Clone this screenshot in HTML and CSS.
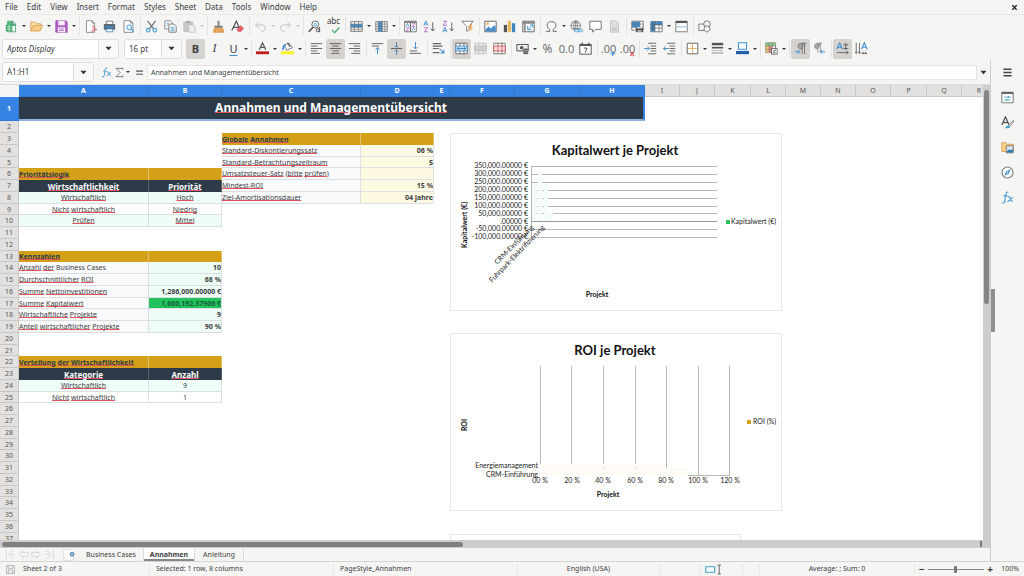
FILE: index.html
```html
<!DOCTYPE html>
<html lang="en">
<head>
<meta charset="utf-8">
<title>Annahmen und Managementübersicht</title>
<link rel="stylesheet" href="styles.css">
</head>
<body>
<svg class="sprite" aria-hidden="true">
  <symbol id="new" viewBox="0 0 16 16"><path d="M3 1.5h7l3 3v10H3z" fill="#fff" stroke="#3c9b63"/><path d="M3 1.5h7l3 3v3H3z" fill="#54b87c"/><path d="M10 1v4h3" fill="#fff" stroke="#777" stroke-width=".8"/><path d="M1 6h8v8H1z" fill="#35a565"/><path d="M2 8.500h6M2 11.500h6M5 6v8" stroke="#d9f2e2"/></symbol>
  <symbol id="open" viewBox="0 0 16 16"><path d="M1 13.500V2.500h5l1.500 2H13v3" fill="#fbe3b5" stroke="#d99a45"/><path d="M1 13.500l3-7h11.500l-3 7z" fill="#f8cf86" stroke="#d99a45"/></symbol>
  <symbol id="save" viewBox="0 0 16 16"><path d="M1 1h12.500L15 2.500V15H1z" fill="#b260c4" stroke="#9a48ae"/><path d="M4 1h8v5.500H4zM3.500 9h9v6h-9z" fill="#f7eefa"/><path d="M5 11h6M5 13h6" stroke="#b260c4"/></symbol>
  <symbol id="pdf" viewBox="0 0 16 16"><path d="M3 .8h7l3 3v11.400H3z" fill="#fff" stroke="#777"/><path d="M10 .8v3h3" fill="none" stroke="#777"/><path d="M9 15c5-5 1-6 2-8s2 5 5 5-5 0-7 3z" fill="none" stroke="#e0606a"/></symbol>
  <symbol id="print" viewBox="0 0 16 16"><path d="M4 5V1.500h8V5" fill="#fff" stroke="#666"/><rect x="1" y="5" width="14" height="7" rx="1" fill="#5d6870"/><path d="M3 8.500h10" stroke="#3f8fd0" stroke-width="2"/><path d="M4 11h8v3.500H4z" fill="#fff" stroke="#3f7fb0"/></symbol>
  <symbol id="preview" viewBox="0 0 16 16"><path d="M2.500.8h8l3 3v11.400h-11z" fill="#fff" stroke="#777"/><path d="M10.500.8v3h3" fill="none" stroke="#777"/><circle cx="9" cy="9" r="3" fill="#e2f2fb" stroke="#3f9bd0" stroke-width="1.200"/><path d="M11 11l3.500 3.500" stroke="#3f9bd0" stroke-width="1.400"/></symbol>
  <symbol id="cut" viewBox="0 0 16 16"><path d="M3 1l7.500 10M13 1L5.500 11" stroke="#666" stroke-width="1.300"/><circle cx="4" cy="12.500" r="2.200" fill="none" stroke="#3f9bd0" stroke-width="1.300"/><circle cx="12" cy="12.500" r="2.200" fill="none" stroke="#3f9bd0" stroke-width="1.300"/></symbol>
  <symbol id="copy" viewBox="0 0 16 16"><path d="M1 1h7l2 2v8H1z" fill="#fff" stroke="#777"/><path d="M6 5h6.500L15 7.500V15H6z" fill="#fff" stroke="#666"/><path d="M3 4h3M3 6.500h2M8 9h5M8 11h5M8 13h5" stroke="#3f9bd0"/></symbol>
  <symbol id="paste" viewBox="0 0 16 16"><path d="M1 2.500h11V14H1z" fill="#c9c8c6" stroke="#bbb"/><path d="M4 1h5v3H4z" fill="#aaa"/><path d="M7 6h5l3 2.500V15H7z" fill="#eee" stroke="#bbb"/></symbol>
  <symbol id="brush" viewBox="0 0 16 16"><path d="M8 1v6" stroke="#888" stroke-width="2.500"/><path d="M3 7h10v2.500H3z" fill="#777"/><path d="M3 10h10l1.500 5h-13z" fill="#f1b06b" stroke="#dd8d3c"/><path d="M5 11l-1 4M8 11v4M11 11l1 4" stroke="#c9762b" stroke-width=".7"/></symbol>
  <symbol id="clear" viewBox="0 0 16 16"><path d="M1 13L6.500 1.500 12 13M3 9h7" fill="none" stroke="#555" stroke-width="1.500"/><path d="M7 12l5-5 3.500 3.500L12 14H9z" fill="#e8616b" stroke="#c63b48" stroke-width=".7"/></symbol>
  <symbol id="undo" viewBox="0 0 16 16"><path d="M6 2L2 6l4 4M2 6h8q4 0 4 4t-5 4" fill="none" stroke="#c4c2c0" stroke-width="1.200"/></symbol>
  <symbol id="redo" viewBox="0 0 16 16"><path d="M10 2l4 4-4 4M14 6H6q-4 0-4 4t5 4" fill="none" stroke="#c4c2c0" stroke-width="1.200"/></symbol>
  <symbol id="find" viewBox="0 0 16 16"><circle cx="9" cy="5.500" r="4.300" fill="#fff" stroke="#666" stroke-width="1.200"/><path d="M6 9L1 14.500" stroke="#555" stroke-width="2"/><circle cx="9" cy="5.800" r="1.700" fill="none" stroke="#3f9bd0" stroke-width="1.200"/><circle cx="12" cy="12.500" r="2" fill="none" stroke="#555" stroke-width="1.200"/><path d="M14.300 8.500v6.500" stroke="#555" stroke-width="1.200"/></symbol>
  <symbol id="check" viewBox="0 0 16 16"><path d="M5 11l3 3.500L14 8" fill="none" stroke="#4ab072" stroke-width="1.500"/></symbol>
  <symbol id="row" viewBox="0 0 16 16"><path d="M1 2h14v12H1z" fill="#fff" stroke="#666"/><path d="M1 5h14v4H1z" fill="#3f8fd0"/><path d="M1 5h14M1 9h14M1 11.500h14M5.500 2v12M10.500 2v12" stroke="#777" stroke-width=".9"/></symbol>
  <symbol id="col" viewBox="0 0 16 16"><path d="M1 2h14v12H1z" fill="#fff" stroke="#666"/><path d="M4 2h5v12H4z" fill="#3f8fd0"/><path d="M1 5h14M1 8h14M1 11h14M4 2v12M9 2v12M12 2v12" stroke="#777" stroke-width=".9"/></symbol>
  <symbol id="sort" viewBox="0 0 16 16"><path d="M.8 1.500h14.400v13H.8z" fill="#fff" stroke="#666"/><path d="M1 2.500h14M8 2v12" stroke="#666" stroke-width="1.500"/><path d="M2.500 8l1.700-4L6 8M10 13l1.700-4 1.800 4" fill="none" stroke="#3f8fd0"/><path d="M2.500 9.500H6l-3.500 4H6M10 4.500h3.500L10 8h3.500" fill="none" stroke="#b260c4"/></symbol>
  <symbol id="az" viewBox="0 0 16 16"><path d="M1 7l2.500-6L6 7M2 5h3" fill="none" stroke="#3f8fd0" stroke-width="1.100"/><path d="M1.500 9.500h4.300l-4.300 5h4.500" fill="none" stroke="#b260c4" stroke-width="1.100"/><path d="M12 3v10.500M9.500 10.500l2.500 3 2.500-3" fill="none" stroke="#666" stroke-width="1.200"/></symbol>
  <symbol id="za" viewBox="0 0 16 16"><path d="M1 15l2.500-6L6 15M2 13h3" fill="none" stroke="#3f8fd0" stroke-width="1.100"/><path d="M1.500 1.500h4.300l-4.300 5h4.500" fill="none" stroke="#b260c4" stroke-width="1.100"/><path d="M12 3v10.500M9.500 10.500l2.500 3 2.500-3" fill="none" stroke="#666" stroke-width="1.200"/></symbol>
  <symbol id="filter" viewBox="0 0 16 16"><path d="M1 1.500h14L10 8v4l-3 2V8z" fill="#fff" stroke="#777" stroke-width="1.100"/><path d="M12 5l-3 5h3l-2 5 5-6h-3l2-4z" fill="#f3a04a"/></symbol>
  <symbol id="image" viewBox="0 0 16 16"><path d="M1 1.500h14v13H1z" fill="#fff" stroke="#666" stroke-width="1.200"/><path d="M1.500 12l4-4 3 2.500 4-4 2 2V14h-13z" fill="#4a90cf"/><circle cx="4.500" cy="4.500" r="1.500" fill="#f0a850"/></symbol>
  <symbol id="chart" viewBox="0 0 16 16"><path d="M1 6h4v9H1z" fill="#555"/><path d="M6 1h4v14H6z" fill="#e8b95d"/><path d="M11 4h4v11h-4z" fill="#3f85c0"/></symbol>
  <symbol id="pivot" viewBox="0 0 16 16"><path d="M1 1.500h14v13H1z" fill="#fff" stroke="#666" stroke-width="1.200"/><path d="M1 3.500h14M3.500 2v12" stroke="#888" stroke-width="2"/><path d="M7 7v5h5M7 12l6-6M10 6h3v3" fill="none" stroke="#3f9bd0" stroke-width="1.200"/></symbol>
  <symbol id="omega" viewBox="0 0 16 16"><path d="M1.500 14H6v-2Q2.500 9.500 2.500 6.500 2.500 2 8 2t5.500 4.500Q13.500 9.500 10 12v2h4.500" fill="none" stroke="#666" stroke-width="1.200"/></symbol>
  <symbol id="link" viewBox="0 0 16 16"><circle cx="7" cy="7" r="5.800" fill="#fff" stroke="#666"/><path d="M1 7h12M7 1v12M3 3.500h8M3 10.500h8M7 1q-5 6 0 12M7 1q5 6 0 12" fill="none" stroke="#666" stroke-width=".8"/><path d="M6 11.500h4v3H6zM11 11.500h4v3h-4z" fill="#fff" stroke="#3f9bd0"/></symbol>
  <symbol id="note" viewBox="0 0 16 16"><path d="M1 1.500h14v10H8L4.500 15v-3.500H1z" fill="#fff" stroke="#666" stroke-width="1.100"/></symbol>
  <symbol id="head" viewBox="0 0 16 16"><path d="M3 1h7l3 3v11H3z" fill="#e0dfdd" stroke="#c4c2c0"/><path d="M5 9h6v4H5z" fill="#cbc9c7"/></symbol>
  <symbol id="area" viewBox="0 0 16 16"><path d="M1 1.500h14v11H1z" fill="#fff" stroke="#666"/><path d="M1 2h10v7H1z" fill="#3f8fd0"/><path d="M1 5h14M1 9h14M6 2v10M11 2v10" stroke="#666" stroke-width=".7"/><path d="M6 10h9v5H6z" fill="#555"/><path d="M8 9h5v1H8zM8 13h5v1H8z" fill="#fff"/></symbol>
  <symbol id="freeze" viewBox="0 0 16 16"><path d="M1 2h14v12.500H1z" fill="#fff" stroke="#666"/><path d="M1 2h5v12H1zM1 2h14v4H1z" fill="#3f8fd0"/><path d="M1 6h14M1 10h14M6 2v12M11 2v12M3.500 1v13" stroke="#555" stroke-width=".8"/></symbol>
  <symbol id="split" viewBox="0 0 16 16"><path d="M1 1.500h14v13H1z" fill="#fff" stroke="#666"/><path d="M1 2.500h14" stroke="#555" stroke-width="2.500"/><path d="M2.500 8.500h11" stroke="#3f9bd0" stroke-dasharray="3 1"/></symbol>
  <symbol id="draw" viewBox="0 0 16 16"><path d="M1 5h8v8H1z" fill="none" stroke="#666"/><circle cx="11" cy="5" r="4" fill="#f5f5f4" stroke="#666"/><path d="M9 7l5 1 1 4-4 3-4-3z" fill="#f5f5f4" stroke="#666"/></symbol>

  <symbol id="left" viewBox="0 0 16 16"><path d="M1 2h14M1 5h8M1 8h14M1 11h8M1 14h11" stroke="#666" stroke-width="1.200"/></symbol>
  <symbol id="center" viewBox="0 0 16 16"><path d="M1 2h14M4 5h8M1 8h14M4 11h8M3 14h10" stroke="#666" stroke-width="1.200"/></symbol>
  <symbol id="right" viewBox="0 0 16 16"><path d="M1 2h14M7 5h8M1 8h14M7 11h8M4 14h11" stroke="#666" stroke-width="1.200"/></symbol>
  <symbol id="top" viewBox="0 0 16 16"><path d="M1 2h14M1 5h9" stroke="#666" stroke-width="1.200"/><path d="M8 15V7M5.500 9.500L8 7l2.500 2.500" fill="none" stroke="#3f8fd0" stroke-width="1.200"/></symbol>
  <symbol id="middle" viewBox="0 0 16 16"><path d="M1 8h14" stroke="#666" stroke-width="1.400"/><path d="M8 0v6M6 4.500l2 2 2-2M8 16v-6M6 11.500l2-2 2 2" fill="none" stroke="#4a87b8" stroke-width="1.200"/></symbol>
  <symbol id="bottom" viewBox="0 0 16 16"><path d="M1 11h9M1 14h14" stroke="#666" stroke-width="1.200"/><path d="M8 0v8M5.500 6L8 8.500 10.500 6" fill="none" stroke="#3f8fd0" stroke-width="1.200"/></symbol>
  <symbol id="wrap" viewBox="0 0 16 16"><path d="M1 2h10M1 5h12M1 8h7M1 13h8" stroke="#666" stroke-width="1.400"/><path d="M9 8l5 5M14.500 9.500v4h-4" fill="none" stroke="#3f8fd0" stroke-width="1.300"/></symbol>
  <symbol id="merge" viewBox="0 0 16 16"><path d="M1 1.500h14v13H1z" fill="#fff" stroke="#555"/><path d="M1 5h14v6H1z" fill="#bfe0f5" stroke="#3f8fd0"/><path d="M6 1.500V5M11 1.500V5M6 11v3.500M11 11v3.500" stroke="#555"/><path d="M3 8h10M5 6.500L3 8l2 1.500M11 6.500L13 8l-2 1.500" fill="none" stroke="#3178b5"/></symbol>
  <symbol id="merge2" viewBox="0 0 16 16"><path d="M1 1.500h14v13H1z" fill="#eee" stroke="#bbb"/><path d="M1 5h14v6H1z" fill="#d0cfcd" stroke="#bbb"/><path d="M6 1.500V5M11 1.500V5M6 11v3.500M11 11v3.500" stroke="#bbb"/></symbol>
  <symbol id="unmerge" viewBox="0 0 16 16"><path d="M1 1.500h14v13H1z" fill="#fff" stroke="#666"/><path d="M6 1.500V5M11 1.500V5M6 11v3.500M11 11v3.500" stroke="#666"/><path d="M1 5h14v6H1zM6 5v6M11 5v6" fill="#fbe3e3" stroke="#d9484e"/></symbol>
  <symbol id="money" viewBox="0 0 16 16"><path d="M1 3h14v8H1z" fill="#eee" stroke="#555" stroke-width="1.200"/><circle cx="7" cy="7" r="2.200" fill="#555"/><path d="M9 9q0-1 3-1t3 1v5q0 1-3 1t-3-1z" fill="#555"/><path d="M9.500 10.500h5M9.500 12.500h5" stroke="#ddd" stroke-width=".7"/></symbol>
  <symbol id="date" viewBox="0 0 16 16"><path d="M1 3h14v12H1z" fill="#fff" stroke="#555" stroke-width="1.200"/><path d="M1 4h14M4 1v3M12 1v3" stroke="#555" stroke-width="1.800"/><path d="M6 7.500h4L7.500 13" fill="none" stroke="#555" stroke-width="1.200"/></symbol>
  <symbol id="plus" viewBox="0 0 16 16"><path d="M12 9v6M9 12h6" stroke="#3f8fd0" stroke-width="1.300"/></symbol>
  <symbol id="cross" viewBox="0 0 16 16"><path d="M10 10l5 5M15 10l-5 5" stroke="#e0505a" stroke-width="1.300"/></symbol>
  <symbol id="indent" viewBox="0 0 16 16"><path d="M5 1.500h10M8 5h7M8 8h7M8 11h7M5 14.500h10" stroke="#666" stroke-width="1.200"/><path d="M0 8h6M4 5.500L6.500 8 4 10.500" fill="none" stroke="#3f8fd0" stroke-width="1.200"/></symbol>
  <symbol id="outdent" viewBox="0 0 16 16"><path d="M5 1.500h10M8 5h7M8 8h7M8 11h7M5 14.500h10" stroke="#666" stroke-width="1.200"/><path d="M.5 8H7M3 5.500L.5 8 3 10.500" fill="none" stroke="#3f8fd0" stroke-width="1.200"/></symbol>
  <symbol id="border" viewBox="0 0 16 16"><path d="M1.500 1.500h13v13h-13z" fill="#fff" stroke="#666" stroke-width="1.200"/><path d="M8 2v12M2 8h12" stroke="#dda04e"/></symbol>
  <symbol id="lines" viewBox="0 0 16 16"><path d="M1 2.500h14" stroke="#555" stroke-width="3"/><path d="M1 7h14" stroke="#555" stroke-width="2"/><path d="M1 10.500h14" stroke="#666" stroke-dasharray="1 1"/><path d="M1 13.500h14" stroke="#777"/></symbol>
  <symbol id="bcolor" viewBox="0 0 16 16"><path d="M3 1h10v8H3z" fill="#fff" stroke="#3f8fd0" stroke-width="1.300"/><path d="M0 11h16v4H0z" fill="#2060a8"/></symbol>
  <symbol id="cond" viewBox="0 0 16 16"><path d="M1 1h12v12H1z" fill="#fff" stroke="#666"/><path d="M1 1h4v4H1zM5 1h8v4H5z" fill="#8cc98a"/><path d="M1 5h4v4H1zM1 9h4v4H1z" fill="#efc26d"/><path d="M5 5h4v8H5z" fill="#e58080"/><path d="M1 5h12M1 9h12M5 1v12M9 1v12" stroke="#777" stroke-width=".7"/><path d="M8 8h7v7H8z" fill="#fff" stroke="#555"/><path d="M10 10.500h3M10 13h3M13 9l-3 5" stroke="#555" stroke-width=".8"/></symbol>
  <symbol id="ltr" viewBox="0 0 16 16"><path d="M10 15V1.500M13 15V1.500M15 1.500H9q-4 0-4 3.500t5 3.500" fill="#aaa" stroke="#666"/><path d="M1 12h6M4.500 9.500L7 12l-2.500 2.500" fill="none" stroke="#3f8fd0" stroke-width="1.200"/></symbol>
  <symbol id="rtl" viewBox="0 0 16 16"><path d="M6 13V1.500M9 13V1.500M11 1.500H6q-4 0-4 3.500t4 3.500" fill="#aaa" stroke="#888"/><path d="M15 12H9M11.500 9.500L9 12l2.500 2.500" fill="none" stroke="#3f8fd0" stroke-width="1.200"/></symbol>
  <symbol id="txth" viewBox="0 0 16 16"><path d="M1 9l3.500-8L8 9M2.500 6.500h4" fill="none" stroke="#3f8fd0" stroke-width="1.400"/><path d="M1 13h14M13 11l2 2-2 2M9 3.500h6M9 8h6M12 1v9" fill="none" stroke="#555"/></symbol>
  <symbol id="txtv" viewBox="0 0 16 16"><path d="M8 9l3.500-8L15 9M9.500 6.500h4" fill="none" stroke="#3f8fd0" stroke-width="1.400"/><path d="M1.500 1v13M5.500 1v13M0 12l1.500 2L3 12M4 12l1.500 2L7 12M8 14h7M10 12v3M13 12v3" fill="none" stroke="#555"/></symbol>
  <symbol id="bucket" viewBox="0 0 16 16"><path d="M4 3.500l6-2 4 5.500-7 3z" fill="#fff" stroke="#666"/><path d="M2.500 9.500q0-5 3-5.500" fill="none" stroke="#3f8fd0" stroke-width="2.200"/><path d="M8 1l3 5" stroke="#555" stroke-width="1.400"/><path d="M0 11.500h16V15H0z" fill="#fcf21e"/></symbol>
  <symbol id="fcolor" viewBox="0 0 16 16"><path d="M4 9.500L8 1l4 8.500M5.500 6.500h5" fill="none" stroke="#555" stroke-width="1.500"/><path d="M0 11.500h16V15H0z" fill="#c01c1c"/></symbol>
  <symbol id="sum" viewBox="0 0 16 16"><path d="M13 4V2H3l6 6-6 6h10v-2" fill="none" stroke="#666" stroke-width="1.200"/></symbol>
  <symbol id="equal" viewBox="0 0 16 16"><path d="M3 6h10M3 10.500h10" stroke="#555" stroke-width="1.600"/></symbol>
  <symbol id="fx" viewBox="0 0 16 16"><path d="M9 1.500Q6.500.5 6 4L4.800 12Q4 15.500 1.500 14.500M3 6h5M8.500 7q2-1 2.500 2t3.500 4M14.500 7.500L8 13.500" fill="none" stroke="#4a9bd0" stroke-width="1.400"/></symbol>
  <symbol id="menu" viewBox="0 0 16 16"><path d="M3 4h10M3 8h10M3 12h10" stroke="#444" stroke-width="1.600"/></symbol>
  <symbol id="props" viewBox="0 0 16 16"><path d="M1 1.500h14v13H1z" fill="#fff" stroke="#777" stroke-width="1.200"/><path d="M1 2.500h14" stroke="#666" stroke-width="2.500"/><path d="M4 7.500h8M4 11h8M9 6v3M7 9.500v3" stroke="#3f9bb8"/></symbol>
  <symbol id="styles" viewBox="0 0 16 16"><path d="M1 11L5.500 1 10 11M2.500 8h6" fill="none" stroke="#555" stroke-width="1.600"/><path d="M15.500 5l-6 6.500 1.500 1.500 5-7z" fill="#fff" stroke="#777"/><path d="M5 15q2-4 5-3t-1 3z" fill="#3f9bd0"/></symbol>
  <symbol id="gallery" viewBox="0 0 16 16"><path d="M1 13V2h5l1 2h8v9z" fill="#f9cf8a" stroke="#dd9b48"/><path d="M6.500 6h8.500v8.500H6.500z" fill="#dceefa" stroke="#666"/><path d="M7 13l3-3 2 1.500 2.500-2V14H7z" fill="#3178b5"/></symbol>
  <symbol id="nav" viewBox="0 0 16 16"><circle cx="8" cy="8" r="6.800" fill="#fff" stroke="#777" stroke-width="1.300"/><path d="M12 4L9.500 9.500 4 12l2.500-5.500z" fill="#3f8fd0"/><circle cx="8" cy="8" r="1" fill="#fff"/></symbol>
  <symbol id="close" viewBox="0 0 16 16"><path d="M3 3l10 10M13 3L3 13" stroke="#222" stroke-width="3"/></symbol>
  <symbol id="caret" viewBox="0 0 16 16"><path d="M1 4h14l-7 8z" fill="#2e3436"/></symbol>
  <symbol id="first" viewBox="0 0 16 16"><path d="M2 1v14M13 2L5 8l8 6M8 8h7" fill="none" stroke="#d0cecb"/></symbol>
  <symbol id="prev" viewBox="0 0 16 16"><path d="M9 2L2 8l7 6M5 5h10v6H5" fill="none" stroke="#d0cecb"/></symbol>
  <symbol id="next" viewBox="0 0 16 16"><path d="M7 2l7 6-7 6M11 5H1v6h10" fill="none" stroke="#d0cecb"/></symbol>
  <symbol id="last" viewBox="0 0 16 16"><path d="M14 1v14M3 2l8 6-8 6M1 8h7" fill="none" stroke="#d0cecb"/></symbol>
  <symbol id="addsheet" viewBox="0 0 16 16"><path d="M1 1h9l4 4v10H1z" fill="#fff" stroke="#d5d3d0"/><circle cx="12" cy="7" r="3" fill="#4f86b5"/><path d="M12 5.500v3M10.500 7h3" stroke="#fff" stroke-width=".8"/></symbol>
  <symbol id="disk" viewBox="0 0 16 16"><path d="M1 1h14v14H1zM4 1v5h8V1M4 15V9h8v6" fill="none" stroke="#8d8b89"/></symbol>
  <symbol id="selmode" viewBox="0 0 24 16"><path d="M1.500 4h13v8h-13z" fill="#fff" stroke="#3f9bc0" stroke-width="1.500"/><path d="M21 2v12M18.500 1.500h5M18.500 14.500h5" stroke="#555" stroke-width="1.300"/></symbol>
</svg>

<nav class="menubar">
  <div class="menus"><button>File</button><button>Edit</button><button>View</button><button>Insert</button><button>Format</button><button>Styles</button><button>Sheet</button><button>Data</button><button>Tools</button><button>Window</button><button>Help</button></div>
  <button class="close" aria-label="Close document"><svg><use href="#close"/></svg></button>
</nav>

<div class="toolbar" role="toolbar" aria-label="Standard">
  <button class="tb" aria-label="New"><svg><use href="#new"/></svg></button><button class="dd" aria-label="New options"></button>
  <button class="tb" aria-label="Open"><svg><use href="#open"/></svg></button><button class="dd" aria-label="Open options"></button>
  <button class="tb" aria-label="Save"><svg><use href="#save"/></svg></button><button class="dd" aria-label="Save options"></button>
  <i class="sep"></i>
  <button class="tb" aria-label="Export as PDF"><svg><use href="#pdf"/></svg></button>
  <button class="tb" aria-label="Print"><svg><use href="#print"/></svg></button>
  <button class="tb" aria-label="Print preview"><svg><use href="#preview"/></svg></button>
  <i class="sep"></i>
  <button class="tb" aria-label="Cut"><svg><use href="#cut"/></svg></button>
  <button class="tb" aria-label="Copy"><svg><use href="#copy"/></svg></button>
  <button class="tb" aria-label="Paste"><svg><use href="#paste"/></svg></button><button class="dd off" aria-label="Paste options"></button>
  <i class="sep"></i>
  <button class="tb" aria-label="Clone formatting"><svg><use href="#brush"/></svg></button>
  <button class="tb" aria-label="Clear formatting"><svg><use href="#clear"/></svg></button>
  <i class="sep"></i>
  <button class="tb" aria-label="Undo"><svg><use href="#undo"/></svg></button><button class="dd off" aria-label="Undo options"></button>
  <button class="tb" aria-label="Redo"><svg><use href="#redo"/></svg></button><button class="dd off" aria-label="Redo options"></button>
  <i class="sep"></i>
  <button class="tb" aria-label="Find and replace"><svg><use href="#find"/></svg></button>
  <button class="tb spell" aria-label="Spelling"><span>abc</span><svg><use href="#check"/></svg></button>
  <i class="sep"></i>
  <button class="tb" aria-label="Row"><svg><use href="#row"/></svg></button><button class="dd" aria-label="Row options"></button>
  <button class="tb" aria-label="Column"><svg><use href="#col"/></svg></button><button class="dd" aria-label="Column options"></button>
  <i class="sep"></i>
  <button class="tb" aria-label="Sort"><svg><use href="#sort"/></svg></button>
  <button class="tb" aria-label="Sort ascending"><svg><use href="#az"/></svg></button>
  <button class="tb" aria-label="Sort descending"><svg><use href="#za"/></svg></button>
  <button class="tb" aria-label="AutoFilter"><svg><use href="#filter"/></svg></button>
  <i class="sep"></i>
  <button class="tb" aria-label="Insert image"><svg><use href="#image"/></svg></button>
  <button class="tb" aria-label="Insert chart"><svg><use href="#chart"/></svg></button>
  <button class="tb" aria-label="Pivot table"><svg><use href="#pivot"/></svg></button>
  <i class="sep"></i>
  <button class="tb" aria-label="Special character"><svg><use href="#omega"/></svg></button><button class="dd" aria-label="Character options"></button>
  <button class="tb" aria-label="Hyperlink"><svg><use href="#link"/></svg></button>
  <button class="tb" aria-label="Comment"><svg><use href="#note"/></svg></button>
  <button class="tb" aria-label="Headers and footers"><svg><use href="#head"/></svg></button>
  <i class="sep"></i>
  <button class="tb" aria-label="Print area"><svg><use href="#area"/></svg></button>
  <button class="tb" aria-label="Freeze"><svg><use href="#freeze"/></svg></button><button class="dd" aria-label="Freeze options"></button>
  <button class="tb" aria-label="Split window"><svg><use href="#split"/></svg></button>
  <i class="sep"></i>
  <button class="tb" aria-label="Draw functions"><svg><use href="#draw"/></svg></button>
</div>

<div class="toolbar format" role="toolbar" aria-label="Formatting">
  <div class="combo font"><select aria-label="Font name"><option>Aptos Display</option></select><span class="drop"><svg><use href="#caret"/></svg></span></div>
  <div class="combo size"><select aria-label="Font size"><option>16 pt</option></select><span class="drop"><svg><use href="#caret"/></svg></span></div>
  <button class="tb on bold" aria-label="Bold">B</button>
  <button class="tb italic" aria-label="Italic">I</button>
  <button class="tb under" aria-label="Underline">U</button><button class="dd" aria-label="Underline options"></button>
  <i class="sep"></i>
  <button class="tb" aria-label="Font color"><svg><use href="#fcolor"/></svg></button><button class="dd" aria-label="Font color options"></button>
  <button class="tb" aria-label="Background color"><svg><use href="#bucket"/></svg></button><button class="dd" aria-label="Background options"></button>
  <i class="sep"></i>
  <button class="tb" aria-label="Align left"><svg><use href="#left"/></svg></button>
  <button class="tb on" aria-label="Align center"><svg><use href="#center"/></svg></button>
  <button class="tb" aria-label="Align right"><svg><use href="#right"/></svg></button>
  <i class="sep"></i>
  <button class="tb" aria-label="Align top"><svg><use href="#top"/></svg></button>
  <button class="tb on" aria-label="Center vertically"><svg><use href="#middle"/></svg></button>
  <button class="tb" aria-label="Align bottom"><svg><use href="#bottom"/></svg></button>
  <i class="sep"></i>
  <button class="tb" aria-label="Wrap text"><svg><use href="#wrap"/></svg></button>
  <i class="sep"></i>
  <button class="tb on" aria-label="Merge and center"><svg><use href="#merge"/></svg></button>
  <button class="tb" aria-label="Merge cells"><svg><use href="#merge2"/></svg></button>
  <button class="tb" aria-label="Unmerge cells"><svg><use href="#unmerge"/></svg></button>
  <i class="sep"></i>
  <button class="tb" aria-label="Currency"><svg><use href="#money"/></svg></button><button class="dd" aria-label="Currency options"></button>
  <button class="tb num pct" aria-label="Percent">%</button>
  <button class="tb num" aria-label="Number">0.0</button>
  <button class="tb" aria-label="Date"><svg><use href="#date"/></svg></button>
  <i class="sep"></i>
  <button class="tb num" aria-label="Add decimal place">.00<svg><use href="#plus"/></svg></button>
  <button class="tb num" aria-label="Delete decimal place">.00<svg><use href="#cross"/></svg></button>
  <i class="sep"></i>
  <button class="tb" aria-label="Increase indent"><svg><use href="#indent"/></svg></button>
  <button class="tb" aria-label="Decrease indent"><svg><use href="#outdent"/></svg></button>
  <i class="sep"></i>
  <button class="tb" aria-label="Borders"><svg><use href="#border"/></svg></button><button class="dd" aria-label="Border options"></button>
  <button class="tb" aria-label="Border style"><svg><use href="#lines"/></svg></button><button class="dd" aria-label="Border style options"></button>
  <button class="tb" aria-label="Border color"><svg><use href="#bcolor"/></svg></button><button class="dd" aria-label="Border color options"></button>
  <i class="sep"></i>
  <button class="tb" aria-label="Conditional formatting"><svg><use href="#cond"/></svg></button><button class="dd" aria-label="Conditional options"></button>
  <i class="sep"></i>
  <button class="tb on" aria-label="Left to right"><svg><use href="#ltr"/></svg></button>
  <button class="tb" aria-label="Right to left"><svg><use href="#rtl"/></svg></button>
  <i class="sep"></i>
  <button class="tb on" aria-label="Horizontal text"><svg><use href="#txth"/></svg></button>
  <button class="tb" aria-label="Vertical text"><svg><use href="#txtv"/></svg></button>
</div>

<div class="work">
  <main class="doc">
    <div class="formula">
      <div class="combo cellname"><select aria-label="Name box"><option>A1:H1</option></select><span class="drop"><svg><use href="#caret"/></svg></span></div>
      <button class="fb" aria-label="Function wizard"><svg><use href="#fx"/></svg></button>
      <button class="fb narrow" aria-label="Select function"><svg><use href="#sum"/></svg></button><button class="dd" aria-label="Function options"></button>
      <button class="fb eq" aria-label="Formula"><svg><use href="#equal"/></svg></button>
      <input type="text" aria-label="Input line" value="Annahmen und Managementübersicht">
      <button class="expand" aria-label="Expand formula bar"><svg><use href="#caret"/></svg></button>
    </div>
    <div class="view">
      <div class="canvas">
        <table class="sheet">
          <colgroup><col class="c-row"><col class="c-a"><col class="c-b"><col class="c-c"><col class="c-d"><col class="c-e"><col class="c-f"><col class="c-f"><col class="c-f"><col class="c-n"><col class="c-n"><col class="c-w"><col class="c-n"><col class="c-n"><col class="c-n"><col class="c-n"><col class="c-w"><col class="c-n"><col class="c-n"></colgroup>
          <thead><tr><th class="corner"></th><th class="sel">A</th><th class="sel">B</th><th class="sel">C</th><th class="sel">D</th><th class="sel">E</th><th class="sel">F</th><th class="sel">G</th><th class="sel">H</th><th>I</th><th>J</th><th>K</th><th>L</th><th>M</th><th>N</th><th>O</th><th>P</th><th>Q</th><th>R</th></tr></thead>
          <tbody>
            <tr class="first"><th class="sel">1</th><td class="title" colspan="8"><u>Annahmen</u> <u>und</u> <u>Managementübersicht</u></td></tr>
            <tr><th>2</th></tr>
            <tr><th>3</th><td></td><td></td><td class="gold"><u>Globale</u> <u>Annahmen</u></td><td class="gold"></td></tr>
            <tr><th>4</th><td></td><td></td><td class="lab"><u>Standard-Diskontierungssatz</u></td><td class="in">06 %</td></tr>
            <tr><th>5</th><td></td><td></td><td class="lab"><u>Standard-Betrachtungszeitraum</u></td><td class="in">5</td></tr>
            <tr><th>6</th><td class="gold"><u>Prioritätslogik</u></td><td class="gold"></td><td class="lab"><u>Umsatzsteuer-Satz</u> (<u>bitte</u> <u>prüfen</u>)</td><td class="in"></td></tr>
            <tr><th>7</th><td class="dark"><u>Wirtschaftlichkeit</u></td><td class="dark"><u>Priorität</u></td><td class="lab"><u>Mindest-ROI</u></td><td class="in">15 %</td></tr>
            <tr><th>8</th><td class="mid mint"><u>Wirtschaftlich</u></td><td class="mid mint"><u>Hoch</u></td><td class="lab"><u>Ziel-Amortisationsdauer</u></td><td class="in">04 Jahre</td></tr>
            <tr><th>9</th><td class="mid"><u>Nicht</u> <u>wirtschaftlich</u></td><td class="mid"><u>Niedrig</u></td></tr>
            <tr><th>10</th><td class="mid mint"><u>Prüfen</u></td><td class="mid mint"><u>Mittel</u></td></tr>
            <tr><th>11</th></tr>
            <tr><th>12</th></tr>
            <tr><th>13</th><td class="gold"><u>Kennzahlen</u></td><td class="gold"></td></tr>
            <tr><th>14</th><td class="lab"><u>Anzahl</u> <u>der</u> Business Cases</td><td class="val">10</td></tr>
            <tr><th>15</th><td class="lab"><u>Durchschnittlicher</u> <u>ROI</u></td><td class="val">68 %</td></tr>
            <tr><th>16</th><td class="lab"><u>Summe</u> <u>Nettoinvestitionen</u></td><td class="val">1,286,000.00000 €</td></tr>
            <tr><th>17</th><td class="lab"><u>Summe</u> <u>Kapitalwert</u></td><td class="val good">1,660,192.37906 €</td></tr>
            <tr><th>18</th><td class="lab"><u>Wirtschaftliche</u> <u>Projekte</u></td><td class="val">9</td></tr>
            <tr><th>19</th><td class="lab"><u>Anteil</u> <u>wirtschaftlicher</u> <u>Projekte</u></td><td class="val">90 %</td></tr>
            <tr><th>20</th></tr>
            <tr><th>21</th></tr>
            <tr><th>22</th><td class="gold"><u>Verteilung</u> <u>der</u> <u>Wirtschaftlichkeit</u></td><td class="gold"></td></tr>
            <tr><th>23</th><td class="dark"><u>Kategorie</u></td><td class="dark"><u>Anzahl</u></td></tr>
            <tr><th>24</th><td class="mid mint"><u>Wirtschaftlich</u></td><td class="mid mint">9</td></tr>
            <tr><th>25</th><td class="mid"><u>Nicht</u> <u>wirtschaftlich</u></td><td class="mid">1</td></tr>
            <tr><th>26</th></tr><tr><th>27</th></tr><tr><th>28</th></tr><tr><th>29</th></tr><tr><th>30</th></tr><tr><th>31</th></tr><tr><th>32</th></tr><tr><th>33</th></tr><tr><th>34</th></tr><tr><th>35</th></tr><tr><th>36</th></tr><tr><th>37</th></tr>
          </tbody>
        </table>
        <svg class="chart one" viewBox="1 1 330 176" role="img" aria-label="Kapitalwert je Projekt">
          <text class="ct" x="165" y="22">Kapitalwert je Projekt</text>
          <g class="grid"><path d="M81 33.500h186M81 41.500h186M81 49.500h186M81 57.500h186M81 65.500h186M81 73.500h186M81 80.500h186M81 96.500h186M81 104.500h186M81.500 33v71"/><path class="axis" d="M81 88.500h186"/></g>
          <g class="bars green"><path d="M82 50h5v38h-5zM88 40h4v48h-4zM94 50h4v38h-4zM98 80h5v8h-5z"/></g>
          <g class="tick end"><text x="78" y="35">350,000.00000 €</text><text x="78" y="43">300,000.00000 €</text><text x="78" y="51">250,000.00000 €</text><text x="78" y="59">200,000.00000 €</text><text x="78" y="67">150,000.00000 €</text><text x="78" y="75">100,000.00000 €</text><text x="78" y="83">50,000.00000 €</text><text x="78" y="91">.00000 €</text><text x="78" y="98">-50,000.00000 €</text><text x="78" y="106">-100,000.00000 €</text>
          <text transform="translate(84 95) rotate(-45)">CRM-Einführung</text><text transform="translate(95 95) rotate(-46)">Fuhrpark-Elektrifizierung</text></g>
          <text class="at" transform="translate(17 92) rotate(-90)">Kapitalwert (€)</text>
          <text class="at" x="147" y="164">Projekt</text>
          <rect x="276" y="87" width="4" height="4" fill="#2dbd5f"/><text class="tick" x="281" y="91">Kapitalwert (€)</text>
        </svg>
        <svg class="chart two" viewBox="1 1 330 176" role="img" aria-label="ROI je Projekt">
          <text class="ct" x="165" y="22">ROI je Projekt</text>
          <g class="grid"><path d="M90.500 33v98M121.500 33v98M153.500 33v103M185.500 33v103M216.500 33v103M248.500 33v109M279.500 33v109M238 142.500h42"/></g>
          <g class="bars gold-bars"><path d="M91 131h125v3H91zM91 135h147v3H91zM91 139h147v3H91z"/></g>
          <g class="tick end"><text x="88" y="135">Energiemanagement</text><text x="88" y="144">CRM-Einführung</text></g>
          <g class="tick center"><text x="90" y="150">00 %</text><text x="122" y="150">20 %</text><text x="153" y="150">40 %</text><text x="185" y="150">60 %</text><text x="216" y="150">80 %</text><text x="248" y="150">100 %</text><text x="280" y="150">120 %</text></g>
          <text class="at" transform="translate(17 92) rotate(-90)">ROI</text>
          <text class="at" x="158" y="164">Projekt</text>
          <rect x="297" y="87" width="4" height="4" fill="#d4a017"/><text class="tick" x="303" y="91">ROI (%)</text>
        </svg>
        <div class="chart three"></div>
      </div>
      <div class="vbar"><i></i></div>
    </div>
    <div class="hbar"><i></i><b></b></div>
    <div class="tabs">
      <div class="tabnav"><button aria-label="First sheet"><svg><use href="#first"/></svg></button><button aria-label="Previous sheet"><svg><use href="#prev"/></svg></button><button aria-label="Next sheet"><svg><use href="#next"/></svg></button><button aria-label="Last sheet"><svg><use href="#last"/></svg></button></div>
      <button class="add" aria-label="Add sheet"><svg><use href="#addsheet"/></svg></button>
      <button class="tab">Business Cases</button><button class="tab active">Annahmen</button><button class="tab">Anleitung</button>
    </div>
  </main>
  <aside class="side">
    <button aria-label="Sidebar settings"><svg><use href="#menu"/></svg></button>
    <button aria-label="Properties"><svg><use href="#props"/></svg></button>
    <button aria-label="Styles"><svg><use href="#styles"/></svg></button>
    <button aria-label="Gallery"><svg><use href="#gallery"/></svg></button>
    <button aria-label="Navigator"><svg><use href="#nav"/></svg></button>
    <button aria-label="Functions"><svg><use href="#fx"/></svg></button>
    <span class="grip"></span>
  </aside>
</div>

<footer class="status">
  <div class="start"><svg><use href="#disk"/></svg>Sheet 2 of 3</div>
  <div>Selected: 1 row, 8 columns</div>
  <div>PageStyle_Annahmen</div>
  <div class="middle">English (USA)</div>
  <div></div>
  <div class="mode"><svg><use href="#selmode"/></svg></div>
  <div></div>
  <div class="middle">Average: ; Sum: 0</div>
  <div class="zoom"><button aria-label="Zoom out">−</button><input type="range" aria-label="Zoom" min="0" max="100" value="48"><button aria-label="Zoom in">+</button><span>100%</span></div>
</footer>
</body>
</html>
```
FILE: styles.css
```css
* { box-sizing: border-box; }
body {
  margin: 0;
  height: 100vh;
  display: flex;
  flex-direction: column;
  overflow: hidden;
  background: #f5f5f4;
  color: #3c4043;
  font: 7px/10px "Noto Sans", "Open Sans", sans-serif;
}
button, input, select {
  margin: 0;
  padding: 0;
  border: 0;
  background: none;
  color: inherit;
  font: inherit;
  outline: 0;
}
svg { display: block; }
.sprite { position: absolute; width: 0; height: 0; }

.menubar { display: flex; align-items: center; justify-content: space-between; height: 14px; padding: 0 5px; }
.menus { display: flex; gap: 9px; font-size: 8px; }
.close svg { width: 7px; height: 7px; }
.close { padding-right: 1px; }

.toolbar { display: flex; align-items: center; height: 23px; padding-left: 2px; border-top: 1px solid #ebeae9; }
.format { border: 0; }
.tb { position: relative; flex: none; display: flex; align-items: center; justify-content: center; width: 19px; height: 20px; border-radius: 2px; }
.tb svg { width: 13px; height: 13px; }
.tb.on { background: #d5d2cf; }
.bold { font-size: 11px; font-weight: 700; }
.italic { font: italic 12px "Liberation Serif", serif; }
.under { font-size: 11px; text-decoration: underline #3f8fd0; text-underline-offset: 2px; }
.num { font: 11px "Open Sans", "Noto Sans", sans-serif; color: #666; }
.pct { font-size: 12px; }
.num svg, .spell svg { position: absolute; right: 2px; bottom: 2px; }
.spell { align-items: flex-start; font-size: 8px; }
.dd { flex: none; display: flex; align-items: center; justify-content: center; width: 6px; height: 20px; }
.dd::before { content: ""; border: 2px solid transparent; border-top: 2px solid #2e3436; border-bottom: 0; }
.dd.off::before { border-top-color: #c4c2c0; }
.sep { flex: none; width: 4px; height: 18px; background: linear-gradient(#e4e3e1, #e4e3e1) center / 1px 100% no-repeat; }

.combo { display: flex; flex: none; position: relative; height: 20px; border: 1px solid #e0dedc; border-radius: 3px; background: #fff; font-size: 8px; }
.combo select { appearance: none; flex: 1; min-width: 0; padding: 0 4px; }
.drop { display: flex; align-items: center; justify-content: center; width: 20px; border-left: 1px solid #e0dedc; background: #f8f8f7; pointer-events: none; }
.drop svg { width: 7px; height: 7px; }
.font { width: 117px; margin-right: 5px; font-style: italic; }
.size { width: 58px; margin-right: 4px; }
.cellname { width: 92px; margin-right: 5px; }

.work { flex: 1; min-height: 0; display: flex; }
.doc { flex: 1; min-width: 0; display: flex; flex-direction: column; }
.formula { display: flex; align-items: center; height: 24px; padding-left: 2px; }
.fb { width: 14px; display: flex; justify-content: center; }
.fb svg { width: 11px; height: 11px; }
.narrow { width: 12px; }
.eq { width: 16px; }
.formula input { flex: 1; min-width: 0; height: 15px; padding: 0 3px; border: 1px solid #e6e5e3; background: #fff; }
.expand { width: 13px; display: flex; justify-content: center; }
.expand svg { width: 7px; height: 7px; }

.view { flex: 1; min-height: 0; display: flex; border-top: 1px solid #dddbd9; }
.canvas { position: relative; flex: 1; min-width: 0; overflow: hidden; background: #fff; }
.sheet { table-layout: fixed; width: 997px; border-collapse: separate; border-spacing: 0; }
.sheet tr { height: 12px; }
.sheet tbody tr:nth-child(4n+1) { height: 11px; }
.sheet tbody tr.first { height: 24px; }
.sheet th, .sheet td { padding: 0; height: inherit; overflow: hidden; white-space: nowrap; line-height: 9px; }
.sheet th { border-right: 1px solid #c9c8c6; border-bottom: 1px solid #c9c8c6; background: #e2e1df; font-weight: 400; color: #555; text-align: center; }
.sheet th.sel { background: #3584e4; border-color: #3079d6; color: #fff; font-weight: 700; }
.sheet .corner { background: #f5f5f4; border-color: #f5f5f4; }
.c-row { width: 19px; }
.c-a { width: 130px; }
.c-b { width: 73px; }
.c-c { width: 139px; }
.c-d { width: 73px; }
.c-e { width: 16px; }
.c-f { width: 65px; }
.c-n { width: 35px; }
.c-w { width: 36px; }
.sheet u { text-decoration: underline #e0525a 1px; text-underline-offset: 0; text-decoration-skip-ink: none; }
.sheet .title { background: #2d3a47; color: #fff; font-size: 12px; font-weight: 700; line-height: 18px; text-align: center; border-bottom: 2px solid #8fb4e0; border-right: 2px solid #3584e4; }
.gold { background: #d4a017; color: #2d3a47; font-weight: 700; border-right: 1px solid #e2c06a; }
.dark { background: #2d3a47; color: #fff; font-weight: 700; font-size: 8px; text-align: center; border-right: 1px solid #56616c; }
.lab, .in, .val, .mid { border-right: 1px solid #dcdfe2; border-bottom: 1px solid #dcdfe2; }
.lab { background: #f8fafc; }
.in { background: #fef9e3; font-weight: 700; text-align: right; }
.val { background: #edfdf6; font-weight: 700; text-align: right; }
.sheet .good { background: #22c35d; color: #16603a; }
.mid { text-align: center; }
.mint { background: #eefdf8; }

.chart { position: absolute; left: 450px; border: 1px solid #e8e8e8; background: #fff; font-family: Lato, Roboto, sans-serif; font-size: 7px; }
.one, .two { width: 332px; height: 178px; }
.one { top: 48px; }
.two { top: 248px; }
.three { top: 449px; width: 291px; height: 178px; }
.ct { font-size: 13px; font-weight: 700; text-anchor: middle; fill: #111; }
.at { font-weight: 700; text-anchor: middle; fill: #111; }
.tick { fill: #222; }
.end { text-anchor: end; }
.center { text-anchor: middle; }
.grid path { fill: none; stroke: #b8b8b8; }
.grid .axis { stroke: #999; }
.green { fill: #f3fcf8; }
.gold-bars { fill: #fdfbf3; }

.vbar { width: 7px; padding: 5px 1px; background: #cdcdcd; }
.vbar i { display: block; height: 48%; border-radius: 3px; background: #858585; }
.hbar { display: flex; align-items: center; justify-content: space-between; height: 8px; padding: 0 8px 0 2px; background: #cdcdcd; }
.hbar i { width: 47%; height: 5px; border-radius: 3px; background: #808080; }
.hbar b { width: 2px; height: 6px; background: #777; }
.tabs { display: flex; align-items: stretch; height: 13px; }
.tabnav { display: flex; align-items: center; gap: 2px; padding-left: 5px; width: 63px; }
.tabnav svg { width: 11px; height: 11px; }
.add { width: 16px; }
.add svg { width: 12px; height: 12px; }
.tab { padding: 0 7px; border-right: 1px solid #dddbd9; }
.active { padding: 0 6px; background: #fff; font-weight: 700; box-shadow: inset 0 -2px #888; }
.active + .tab { padding: 0 8px; }

.side { position: relative; display: flex; flex-direction: column; align-items: center; gap: 11px; width: 34px; padding-top: 5px; border-left: 1px solid #cfcdcb; }
.side button { height: 14px; }
.side svg { width: 13px; height: 13px; }
.grip { position: absolute; left: 0; top: 229px; width: 4px; height: 43px; background: #8f8f8f; }

.status { display: grid; grid-template-columns: minmax(0, 150fr) minmax(0, 184fr) minmax(0, 184fr) minmax(0, 142fr) minmax(0, 40fr) minmax(0, 43fr) minmax(0, 17fr) minmax(0, 155fr) minmax(0, 109fr); align-items: center; height: 15px; border-top: 1px solid #d6d4d2; }
.status > div { border-right: 1px solid #e8e6e4; padding-left: 6px; white-space: nowrap; min-height: 10px; }
.status > .middle { padding: 0; text-align: center; }
.status .start { display: flex; align-items: center; gap: 8px; }
.start svg { width: 9px; height: 9px; }
.status .mode { padding-left: 4px; }
.mode svg { width: 18px; height: 11px; }
.status .zoom { display: flex; align-items: center; gap: 2px; border: 0; padding: 0 5px 0 3px; }
.zoom button { font-size: 10px; font-weight: 700; width: 8px; }
.zoom span { margin-left: 5px; }
.zoom input { appearance: none; flex: 1; min-width: 0; height: 8px; background: linear-gradient(#888, #888) center / 100% 1px no-repeat; }
.zoom input::-webkit-slider-thumb { appearance: none; width: 3px; height: 7px; background: #777; border-radius: 1px; }
```
